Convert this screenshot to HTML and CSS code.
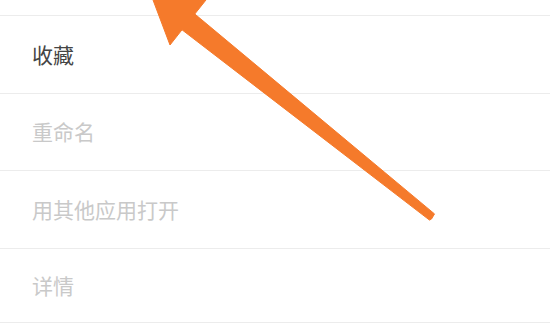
FILE: index.html
```
<!DOCTYPE html>
<html lang="zh">
<head>
<meta charset="utf-8">
<link rel="stylesheet" href="styles.css">
</head>
<body>
<div class="sheet">
  <div class="stub"></div>
  <ul class="menu">
    <li class="item active">收藏</li>
    <li class="item">重命名</li>
    <li class="item">用其他应用打开</li>
    <li class="item">详情</li>
  </ul>
  <svg class="arrow" width="550" height="325" viewBox="0 0 550 325" aria-hidden="true">
    <polygon points="149.7,-8.8 206.6,-0.8 194.8,14 434.5,213.9 431.5,219 429.5,220.1 182,29.8 170,45" fill="#f57a2b" stroke="#f57a2b" stroke-width="1" stroke-linejoin="round"/>
  </svg>
</div>
</body>
</html>
```
FILE: styles.css
```
html, body {
  margin: 0;
  padding: 0;
  background: #ffffff;
}
.sheet {
  position: relative;
  width: 550px;
  height: 325px;
  overflow: hidden;
  font-family: "Noto Sans CJK SC", "Noto Sans", sans-serif;
}
.stub {
  height: 15px;
}
.menu {
  list-style: none;
  margin: 0;
  padding: 0;
  border-bottom: 1px solid #ececec;
}
.item {
  box-sizing: border-box;
  height: 77.5px;
  border-top: 1px solid #ececec;
  display: flex;
  align-items: center;
  padding-left: 32px;
  padding-bottom: 1px;
  font-size: 21px;
  color: #c9c9c9;
}
.item:last-child {
  height: 74px;
  padding-bottom: 0;
}
.item.active {
  color: #454545;
}
.arrow {
  position: absolute;
  left: 0;
  top: 0;
}
```
